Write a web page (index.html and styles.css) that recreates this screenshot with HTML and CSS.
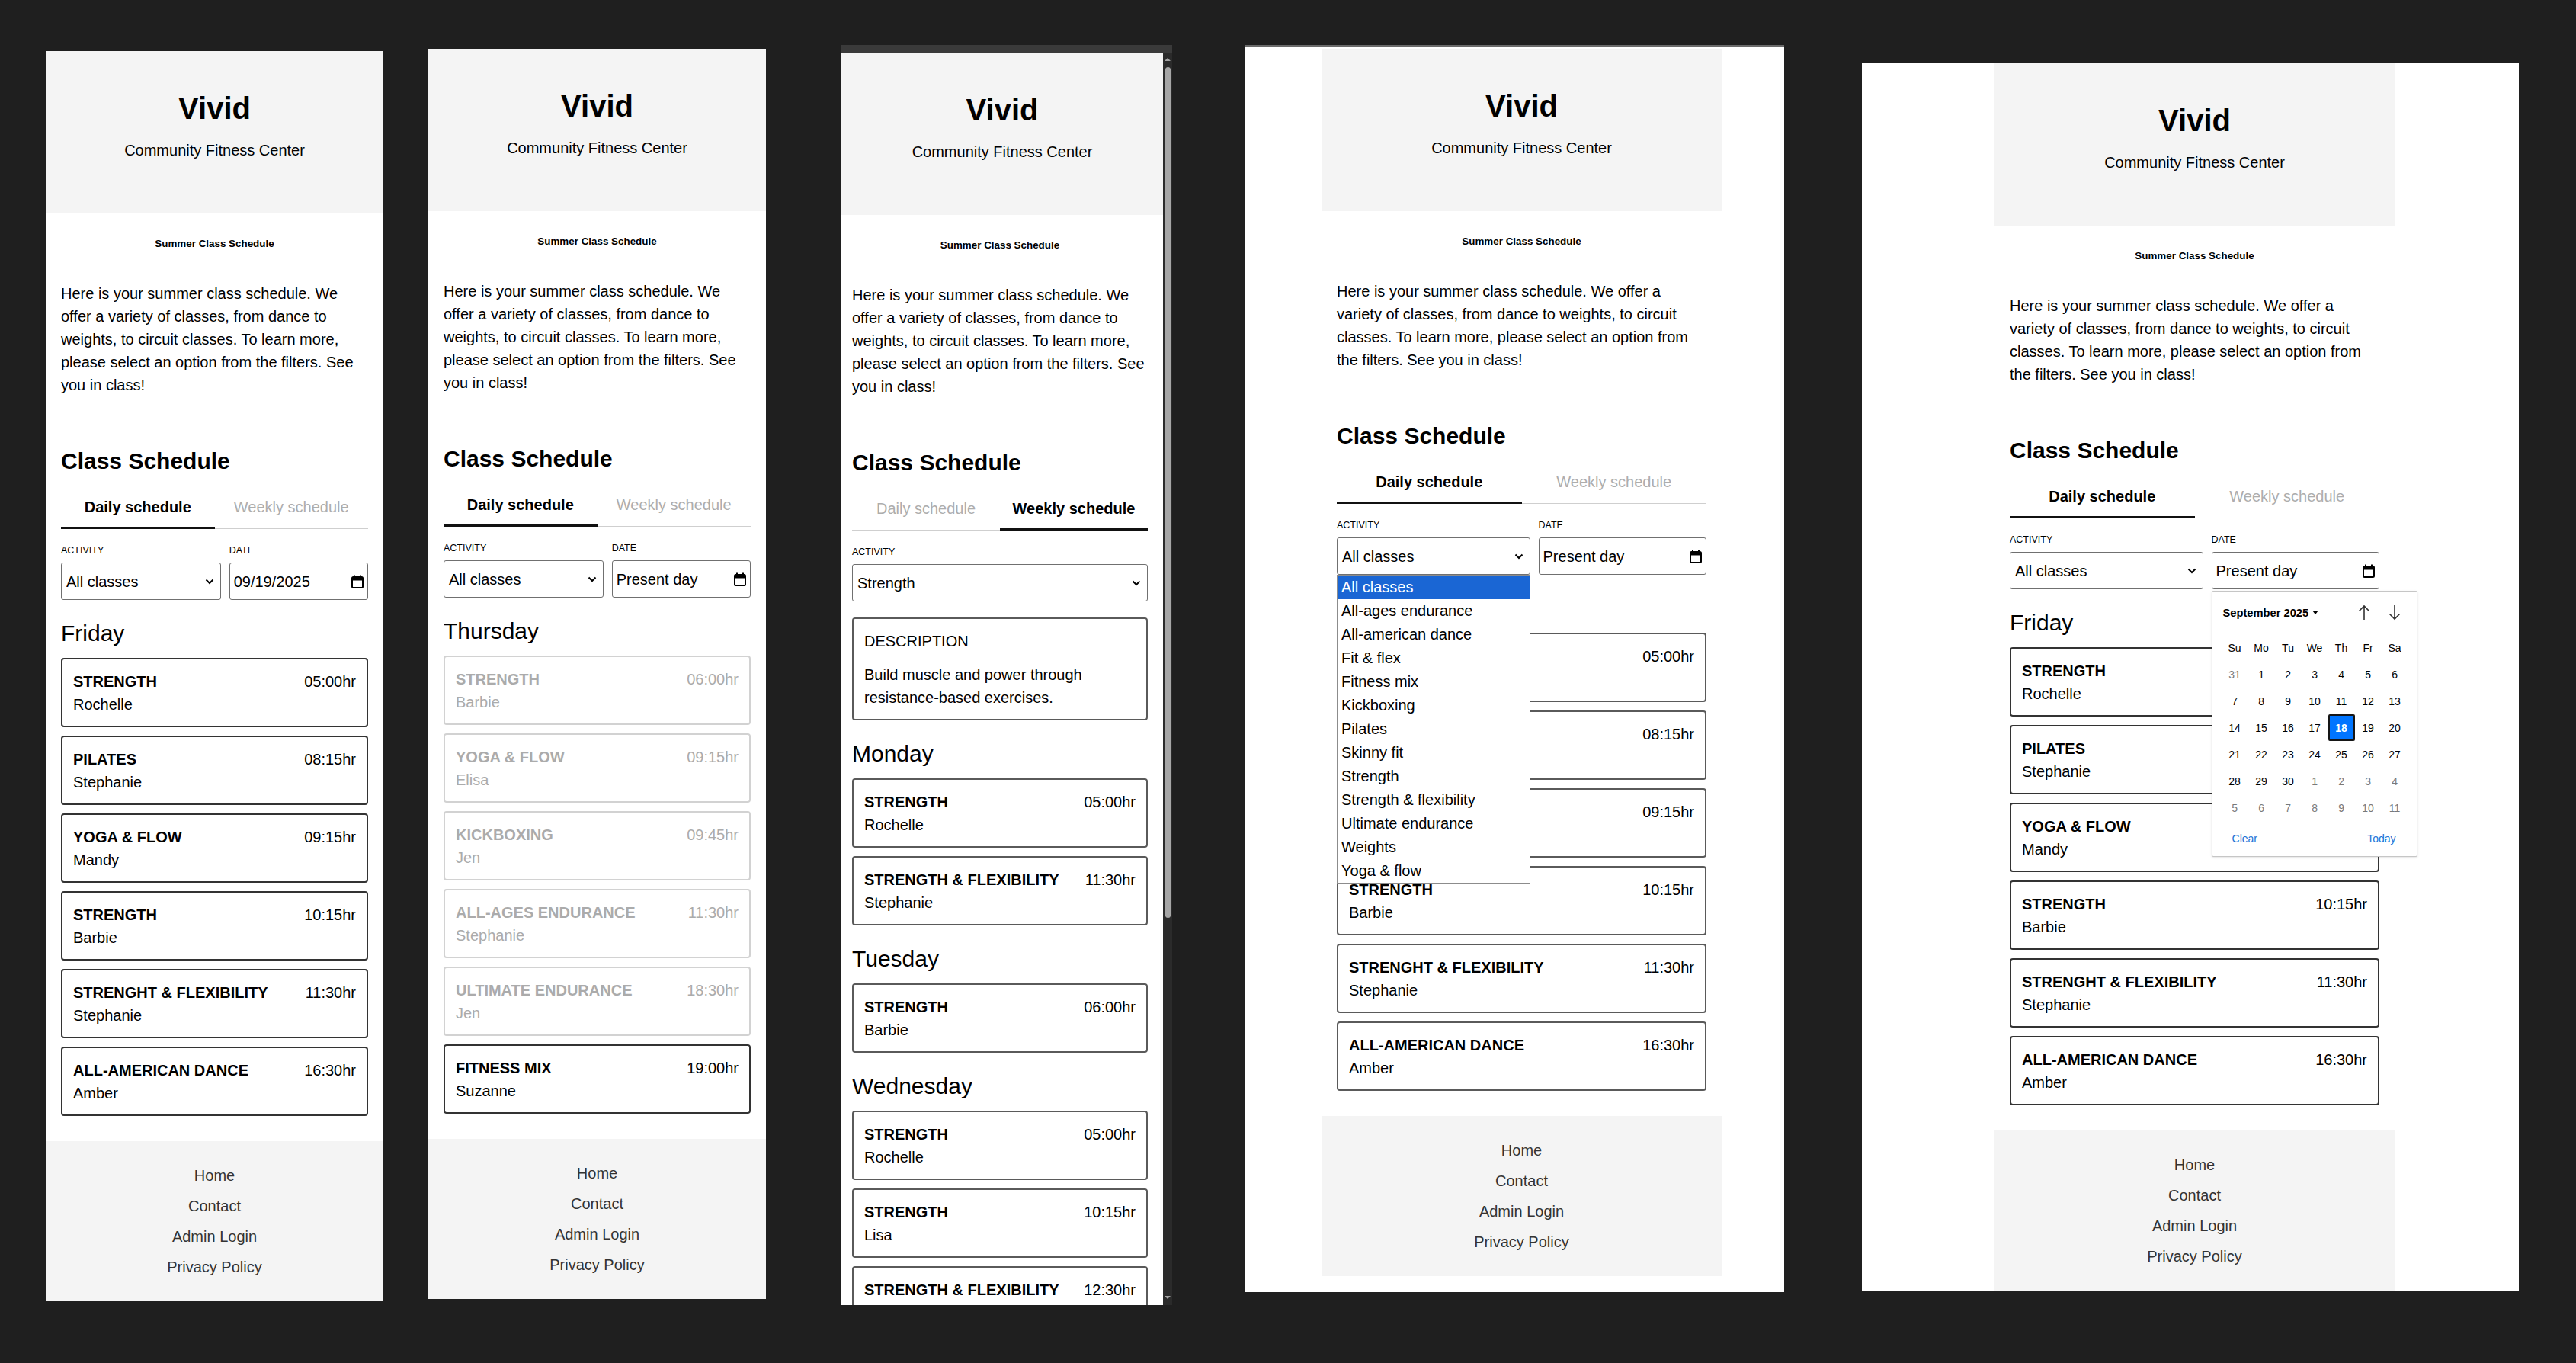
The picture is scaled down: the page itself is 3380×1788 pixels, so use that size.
FILE: index.html
```html
<!DOCTYPE html>
<html lang="en">
<head>
<meta charset="utf-8">
<title>Vivid – Community Fitness Center</title>
<link rel="stylesheet" href="styles.css">
</head>
<body>
<div class="desk">

  <!-- Panel 1: daily schedule, Friday -->
  <section class="panel p1">
    <div class="page">
      <header class="site-header"><h1 class="brand">Vivid</h1><p class="tagline">Community Fitness Center</p></header>
      <main class="content">
        <h6 class="kicker">Summer Class Schedule</h6>
        <p class="intro">Here is your summer class schedule. We offer a variety of classes, from dance to weights, to circuit classes. To learn more, please select an option from the filters. See you in class!</p>
        <h2 class="section-title">Class Schedule</h2>
        <div class="tabs"><div class="tab active">Daily schedule</div><div class="tab">Weekly schedule</div></div>
        <div class="filters">
          <div class="field"><span class="label">ACTIVITY</span><div class="control"><span>All classes</span><svg class="chev" width="12" height="8" viewBox="0 0 12 8"><path d="M1.5 1.5L6 6l4.5-4.5" fill="none" stroke="#000" stroke-width="2"/></svg></div></div>
          <div class="field"><span class="label">DATE</span><div class="control date"><span>09/19/2025</span><svg class="cal-ico" width="16" height="18" viewBox="0 0 16 18"><path d="M4 0.5v3.5M12 0.5v3.5" stroke="#000" stroke-width="2"/><rect x="1" y="3" width="14" height="14" rx="1.5" fill="none" stroke="#000" stroke-width="2"/><rect x="1" y="3" width="14" height="4.5" fill="#000"/></svg></div></div>
        </div>
        <h3 class="day">Friday</h3>
        <div class="cards">
          <div class="card"><div class="card-row"><span class="cls">STRENGTH</span><span>05:00hr</span></div><div>Rochelle</div></div>
          <div class="card"><div class="card-row"><span class="cls">PILATES</span><span>08:15hr</span></div><div>Stephanie</div></div>
          <div class="card"><div class="card-row"><span class="cls">YOGA &amp; FLOW</span><span>09:15hr</span></div><div>Mandy</div></div>
          <div class="card"><div class="card-row"><span class="cls">STRENGTH</span><span>10:15hr</span></div><div>Barbie</div></div>
          <div class="card"><div class="card-row"><span class="cls">STRENGHT &amp; FLEXIBILITY</span><span>11:30hr</span></div><div>Stephanie</div></div>
          <div class="card"><div class="card-row"><span class="cls">ALL-AMERICAN DANCE</span><span>16:30hr</span></div><div>Amber</div></div>
        </div>
      </main>
      <footer class="site-footer"><a href="#">Home</a><a href="#">Contact</a><a href="#">Admin Login</a><a href="#">Privacy Policy</a></footer>
    </div>
  </section>

  <!-- Panel 2: daily schedule, Thursday -->
  <section class="panel p2">
    <div class="page">
      <header class="site-header"><h1 class="brand">Vivid</h1><p class="tagline">Community Fitness Center</p></header>
      <main class="content">
        <h6 class="kicker">Summer Class Schedule</h6>
        <p class="intro">Here is your summer class schedule. We offer a variety of classes, from dance to weights, to circuit classes. To learn more, please select an option from the filters. See you in class!</p>
        <h2 class="section-title">Class Schedule</h2>
        <div class="tabs"><div class="tab active">Daily schedule</div><div class="tab">Weekly schedule</div></div>
        <div class="filters">
          <div class="field"><span class="label">ACTIVITY</span><div class="control"><span>All classes</span><svg class="chev" width="12" height="8" viewBox="0 0 12 8"><path d="M1.5 1.5L6 6l4.5-4.5" fill="none" stroke="#000" stroke-width="2"/></svg></div></div>
          <div class="field"><span class="label">DATE</span><div class="control date"><span>Present day</span><svg class="cal-ico" width="16" height="18" viewBox="0 0 16 18"><path d="M4 0.5v3.5M12 0.5v3.5" stroke="#000" stroke-width="2"/><rect x="1" y="3" width="14" height="14" rx="1.5" fill="none" stroke="#000" stroke-width="2"/><rect x="1" y="3" width="14" height="4.5" fill="#000"/></svg></div></div>
        </div>
        <h3 class="day">Thursday</h3>
        <div class="cards">
          <div class="card off"><div class="card-row"><span class="cls">STRENGTH</span><span>06:00hr</span></div><div>Barbie</div></div>
          <div class="card off"><div class="card-row"><span class="cls">YOGA &amp; FLOW</span><span>09:15hr</span></div><div>Elisa</div></div>
          <div class="card off"><div class="card-row"><span class="cls">KICKBOXING</span><span>09:45hr</span></div><div>Jen</div></div>
          <div class="card off"><div class="card-row"><span class="cls">ALL-AGES ENDURANCE</span><span>11:30hr</span></div><div>Stephanie</div></div>
          <div class="card off"><div class="card-row"><span class="cls">ULTIMATE ENDURANCE</span><span>18:30hr</span></div><div>Jen</div></div>
          <div class="card"><div class="card-row"><span class="cls">FITNESS MIX</span><span>19:00hr</span></div><div>Suzanne</div></div>
        </div>
      </main>
      <footer class="site-footer"><a href="#">Home</a><a href="#">Contact</a><a href="#">Admin Login</a><a href="#">Privacy Policy</a></footer>
    </div>
  </section>

  <!-- Panel 3: weekly schedule, scrolled window -->
  <section class="panel p3">
    <div class="viewport">
      <div class="page">
        <header class="site-header"><h1 class="brand">Vivid</h1><p class="tagline">Community Fitness Center</p></header>
        <main class="content">
          <h6 class="kicker">Summer Class Schedule</h6>
          <p class="intro">Here is your summer class schedule. We offer a variety of classes, from dance to weights, to circuit classes. To learn more, please select an option from the filters. See you in class!</p>
          <h2 class="section-title">Class Schedule</h2>
          <div class="tabs"><div class="tab">Daily schedule</div><div class="tab active">Weekly schedule</div></div>
          <div class="filters single">
            <div class="field"><span class="label">ACTIVITY</span><div class="control"><span>Strength</span><svg class="chev" width="12" height="8" viewBox="0 0 12 8"><path d="M1.5 1.5L6 6l4.5-4.5" fill="none" stroke="#000" stroke-width="2"/></svg></div></div>
          </div>
          <div class="desc">
            <div>DESCRIPTION</div>
            <p class="desc-text">Build muscle and power through resistance-based exercises.</p>
          </div>
          <h3 class="day">Monday</h3>
          <div class="cards">
            <div class="card"><div class="card-row"><span class="cls">STRENGTH</span><span>05:00hr</span></div><div>Rochelle</div></div>
            <div class="card"><div class="card-row"><span class="cls">STRENGTH &amp; FLEXIBILITY</span><span>11:30hr</span></div><div>Stephanie</div></div>
          </div>
          <h3 class="day">Tuesday</h3>
          <div class="cards">
            <div class="card"><div class="card-row"><span class="cls">STRENGTH</span><span>06:00hr</span></div><div>Barbie</div></div>
          </div>
          <h3 class="day">Wednesday</h3>
          <div class="cards">
            <div class="card"><div class="card-row"><span class="cls">STRENGTH</span><span>05:00hr</span></div><div>Rochelle</div></div>
            <div class="card"><div class="card-row"><span class="cls">STRENGTH</span><span>10:15hr</span></div><div>Lisa</div></div>
            <div class="card"><div class="card-row"><span class="cls">STRENGTH &amp; FLEXIBILITY</span><span>12:30hr</span></div><div>Stephanie</div></div>
          </div>
        </main>
      </div>
    </div>
    <div class="scrollbar"><span class="sb-up"></span><span class="sb-thumb"></span><span class="sb-down"></span></div>
  </section>

  <!-- Panel 4: activity dropdown open -->
  <section class="panel p4">
    <div class="page">
      <header class="site-header"><h1 class="brand">Vivid</h1><p class="tagline">Community Fitness Center</p></header>
      <main class="content">
        <h6 class="kicker">Summer Class Schedule</h6>
        <p class="intro">Here is your summer class schedule. We offer a variety of classes, from dance to weights, to circuit classes. To learn more, please select an option from the filters. See you in class!</p>
        <h2 class="section-title">Class Schedule</h2>
        <div class="tabs"><div class="tab active">Daily schedule</div><div class="tab">Weekly schedule</div></div>
        <div class="filters">
          <div class="field"><span class="label">ACTIVITY</span><div class="control"><span>All classes</span><svg class="chev" width="12" height="8" viewBox="0 0 12 8"><path d="M1.5 1.5L6 6l4.5-4.5" fill="none" stroke="#000" stroke-width="2"/></svg></div>
            <div class="dropdown">
              <div class="opt hl">All classes</div>
              <div class="opt">All-ages endurance</div>
              <div class="opt">All-american dance</div>
              <div class="opt">Fit &amp; flex</div>
              <div class="opt">Fitness mix</div>
              <div class="opt">Kickboxing</div>
              <div class="opt">Pilates</div>
              <div class="opt">Skinny fit</div>
              <div class="opt">Strength</div>
              <div class="opt">Strength &amp; flexibility</div>
              <div class="opt">Ultimate endurance</div>
              <div class="opt">Weights</div>
              <div class="opt">Yoga &amp; flow</div>
            </div>
          </div>
          <div class="field"><span class="label">DATE</span><div class="control date"><span>Present day</span><svg class="cal-ico" width="16" height="18" viewBox="0 0 16 18"><path d="M4 0.5v3.5M12 0.5v3.5" stroke="#000" stroke-width="2"/><rect x="1" y="3" width="14" height="14" rx="1.5" fill="none" stroke="#000" stroke-width="2"/><rect x="1" y="3" width="14" height="4.5" fill="#000"/></svg></div></div>
        </div>
        <h3 class="day">Friday</h3>
        <div class="cards">
          <div class="card"><div class="card-row"><span class="cls">STRENGTH</span><span>05:00hr</span></div><div>Rochelle</div></div>
          <div class="card"><div class="card-row"><span class="cls">PILATES</span><span>08:15hr</span></div><div>Stephanie</div></div>
          <div class="card"><div class="card-row"><span class="cls">YOGA &amp; FLOW</span><span>09:15hr</span></div><div>Mandy</div></div>
          <div class="card"><div class="card-row"><span class="cls">STRENGTH</span><span>10:15hr</span></div><div>Barbie</div></div>
          <div class="card"><div class="card-row"><span class="cls">STRENGHT &amp; FLEXIBILITY</span><span>11:30hr</span></div><div>Stephanie</div></div>
          <div class="card"><div class="card-row"><span class="cls">ALL-AMERICAN DANCE</span><span>16:30hr</span></div><div>Amber</div></div>
        </div>
      </main>
      <footer class="site-footer"><a href="#">Home</a><a href="#">Contact</a><a href="#">Admin Login</a><a href="#">Privacy Policy</a></footer>
    </div>
  </section>

  <!-- Panel 5: date picker open -->
  <section class="panel p5">
    <div class="page">
      <header class="site-header"><h1 class="brand">Vivid</h1><p class="tagline">Community Fitness Center</p></header>
      <main class="content">
        <h6 class="kicker">Summer Class Schedule</h6>
        <p class="intro">Here is your summer class schedule. We offer a variety of classes, from dance to weights, to circuit classes. To learn more, please select an option from the filters. See you in class!</p>
        <h2 class="section-title">Class Schedule</h2>
        <div class="tabs"><div class="tab active">Daily schedule</div><div class="tab">Weekly schedule</div></div>
        <div class="filters">
          <div class="field"><span class="label">ACTIVITY</span><div class="control"><span>All classes</span><svg class="chev" width="12" height="8" viewBox="0 0 12 8"><path d="M1.5 1.5L6 6l4.5-4.5" fill="none" stroke="#000" stroke-width="2"/></svg></div></div>
          <div class="field"><span class="label">DATE</span><div class="control date"><span>Present day</span><svg class="cal-ico" width="16" height="18" viewBox="0 0 16 18"><path d="M4 0.5v3.5M12 0.5v3.5" stroke="#000" stroke-width="2"/><rect x="1" y="3" width="14" height="14" rx="1.5" fill="none" stroke="#000" stroke-width="2"/><rect x="1" y="3" width="14" height="4.5" fill="#000"/></svg></div>
            <div class="picker">
              <div class="pk-head">
                <span class="pk-month">September 2025<svg class="pk-caret" width="8" height="5" viewBox="0 0 8 5"><path d="M0 0h8L4 5z" fill="#000"/></svg></span>
                <span class="pk-nav">
                  <svg width="16" height="21" viewBox="0 0 16 21"><path d="M8 20V2M1.5 8.5L8 2l6.5 6.5" fill="none" stroke="#333" stroke-width="1.6"/></svg>
                  <svg width="16" height="21" viewBox="0 0 16 21"><path d="M8 1v18M1.5 12.5L8 19l6.5-6.5" fill="none" stroke="#333" stroke-width="1.6"/></svg>
                </span>
              </div>
              <div class="pk-grid">
                <span class="wd">Su</span><span class="wd">Mo</span><span class="wd">Tu</span><span class="wd">We</span><span class="wd">Th</span><span class="wd">Fr</span><span class="wd">Sa</span>
                <span class="dim">31</span><span>1</span><span>2</span><span>3</span><span>4</span><span>5</span><span>6</span>
                <span>7</span><span>8</span><span>9</span><span>10</span><span>11</span><span>12</span><span>13</span>
                <span>14</span><span>15</span><span>16</span><span>17</span><span class="sel">18</span><span>19</span><span>20</span>
                <span>21</span><span>22</span><span>23</span><span>24</span><span>25</span><span>26</span><span>27</span>
                <span>28</span><span>29</span><span>30</span><span class="dim">1</span><span class="dim">2</span><span class="dim">3</span><span class="dim">4</span>
                <span class="dim">5</span><span class="dim">6</span><span class="dim">7</span><span class="dim">8</span><span class="dim">9</span><span class="dim">10</span><span class="dim">11</span>
              </div>
              <div class="pk-foot"><span>Clear</span><span>Today</span></div>
            </div>
          </div>
        </div>
        <h3 class="day">Friday</h3>
        <div class="cards">
          <div class="card"><div class="card-row"><span class="cls">STRENGTH</span><span>05:00hr</span></div><div>Rochelle</div></div>
          <div class="card"><div class="card-row"><span class="cls">PILATES</span><span>08:15hr</span></div><div>Stephanie</div></div>
          <div class="card"><div class="card-row"><span class="cls">YOGA &amp; FLOW</span><span>09:15hr</span></div><div>Mandy</div></div>
          <div class="card"><div class="card-row"><span class="cls">STRENGTH</span><span>10:15hr</span></div><div>Barbie</div></div>
          <div class="card"><div class="card-row"><span class="cls">STRENGHT &amp; FLEXIBILITY</span><span>11:30hr</span></div><div>Stephanie</div></div>
          <div class="card"><div class="card-row"><span class="cls">ALL-AMERICAN DANCE</span><span>16:30hr</span></div><div>Amber</div></div>
        </div>
      </main>
      <footer class="site-footer"><a href="#">Home</a><a href="#">Contact</a><a href="#">Admin Login</a><a href="#">Privacy Policy</a></footer>
    </div>
  </section>

</div>
</body>
</html>
```

FILE: styles.css
```css
* { box-sizing: border-box; }

html, body { margin: 0; padding: 0; }

body {
  width: 3380px;
  height: 1788px;
  overflow: hidden;
  background: #1f1f1f;
  color: #000;
  font-family: "Liberation Sans", Arial, sans-serif;
  font-size: 20px;
  line-height: 30px;
}

.desk {
  display: flex;
  align-items: flex-start;
  padding-left: 60px;
}

.panel {
  flex: none;
  background: #fff;
}

.p1 { width: 443px; margin-top: 67px; }
.p2 { width: 443px; margin-top: 64px; margin-left: 59px; }

.p3 {
  width: 434px;
  margin-top: 59px;
  margin-left: 99px;
  border-top: 10px solid #3a3a3a;
  display: flex;
}
.p3 .viewport { width: 422px; height: 1643px; overflow: hidden; }
.p3 .content { padding: 0 20px 0 14px; }

.scrollbar {
  width: 12px;
  height: 1643px;
  background: #2b2b2b;
  display: flex;
  flex-direction: column;
  align-items: center;
}
.sb-up {
  margin-top: 7px;
  width: 0; height: 0;
  border-left: 4px solid transparent;
  border-right: 4px solid transparent;
  border-bottom: 4px solid #a3a3a3;
}
.sb-thumb {
  margin-top: 8px;
  width: 7px;
  height: 1116px;
  border-radius: 4px;
  background: #a6a6a6;
}
.sb-down {
  margin-top: auto;
  margin-bottom: 8px;
  width: 0; height: 0;
  border-left: 4px solid transparent;
  border-right: 4px solid transparent;
  border-top: 4px solid #a3a3a3;
}

.p4 {
  width: 708px;
  margin-top: 59px;
  margin-left: 95px;
  border-top: 3px solid #6a6a6a;
  padding: 2px 0 21px 101px;
}
.p5 {
  width: 862px;
  margin-top: 83px;
  margin-left: 102px;
  padding-left: 174px;
}
.p4 .page, .p5 .page { width: 525px; }

/* page */
.site-header {
  height: 213px;
  padding-top: 52px;
  background: #f4f4f4;
  text-align: center;
}
.brand {
  margin: 0;
  font-size: 40px;
  line-height: 46px;
  font-weight: 700;
}
.tagline {
  margin: 17px 0 0;
  font-size: 20px;
  line-height: 30px;
}

.content { padding: 0 20px; }

.kicker {
  margin: 31.5px 0 0;
  font-size: 13.4px;
  line-height: 16px;
  font-weight: 700;
  text-align: center;
}
.intro {
  margin: 42px 0 0;
  font-size: 20px;
  line-height: 30px;
}
.section-title {
  margin: 67px 0 0;
  font-size: 30px;
  line-height: 36px;
  font-weight: 700;
}

.tabs {
  display: flex;
  margin-top: 16px;
}
.tab {
  flex: 1;
  padding: 11px 0;
  text-align: center;
  color: #adadad;
  border-bottom: 1px solid #cfcfcf;
}
.tab.active {
  color: #000;
  font-weight: 700;
  border-bottom: 3px solid #111;
}

.filters {
  display: grid;
  grid-template-columns: 1.15fr 1fr;
  column-gap: 11px;
  margin-top: 21px;
}
.filters.single { grid-template-columns: 1fr; }

.field {
  position: relative;
  display: flex;
  flex-direction: column;
}
.label {
  font-size: 12.5px;
  line-height: 15px;
  margin-bottom: 8.5px;
}
.control {
  height: 49px;
  display: flex;
  align-items: center;
  justify-content: space-between;
  padding: 0 8px 0 6px;
  border: 1px solid #707070;
  border-radius: 3px;
  background: #fff;
}
.control.date { padding: 0 5px 0 5px; }

.day {
  margin: 25.5px 0 14.5px;
  font-size: 30px;
  line-height: 36px;
  font-weight: 400;
}

.cards {
  display: flex;
  flex-direction: column;
  gap: 11px;
}
.card {
  height: 91px;
  padding: 13.5px 14px;
  border: 2px solid #333;
  border-radius: 4px;
}
.p3 .card, .p4 .card, .p3 .desc { border-color: #5a5a5a; }
.card-row {
  display: flex;
  justify-content: space-between;
}
.cls { font-weight: 700; }
.card.off {
  color: #ababab;
  border-color: #d2d2d2;
}

.desc {
  margin-top: 21px;
  padding: 13.5px 14px;
  border: 2px solid #5a5a5a;
  border-radius: 4px;
}
.desc-text { margin: 14px 0 0; }

.site-footer {
  margin-top: 33px;
  padding: 25px 0;
  background: #f4f4f4;
  display: flex;
  flex-direction: column;
  align-items: center;
}
.site-footer a {
  line-height: 40px;
  color: #333;
  text-decoration: none;
}

/* open select list */
.dropdown {
  position: absolute;
  top: 100%;
  left: 0;
  right: 0;
  z-index: 5;
  background: #fff;
  border: 1px solid #8c8c8c;
}
.opt {
  height: 31px;
  line-height: 31px;
  padding-left: 5px;
}
.opt.hl { background: #1a66d4; color: #fff; }

/* date picker */
.picker {
  position: absolute;
  top: calc(100% + 1.5px);
  left: 0;
  z-index: 5;
  width: 270px;
  height: 349px;
  padding: 17px 13px 0 12px;
  background: #fff;
  border: 1px solid #c6c6c6;
  border-radius: 2px;
  box-shadow: 0 1px 3px rgba(0,0,0,0.12);
  font-size: 14px;
  line-height: 20px;
}
.pk-head {
  height: 22px;
  display: flex;
  align-items: center;
  justify-content: space-between;
}
.pk-month {
  padding-left: 2px;
  font-size: 14.7px;
  font-weight: 700;
  display: flex;
  align-items: center;
  gap: 5px;
}
.pk-nav {
  display: flex;
  gap: 24px;
  margin-right: 8px;
}
.pk-nav svg { display: block; }
.pk-grid {
  margin-top: 17.5px;
  display: grid;
  grid-template-columns: repeat(7, 35px);
  grid-auto-rows: 35px;
}
.pk-grid span {
  display: flex;
  align-items: center;
  justify-content: center;
}
.pk-grid .dim { color: #7a7a7a; }
.pk-grid .sel {
  background: #0075ff;
  color: #fff;
  font-weight: 700;
  border: 2px solid #161616;
  border-radius: 2px;
}
.pk-foot {
  margin-top: 12.5px;
  padding: 0 14px 0 14px;
  display: flex;
  justify-content: space-between;
  color: #1b73d6;
}
```
